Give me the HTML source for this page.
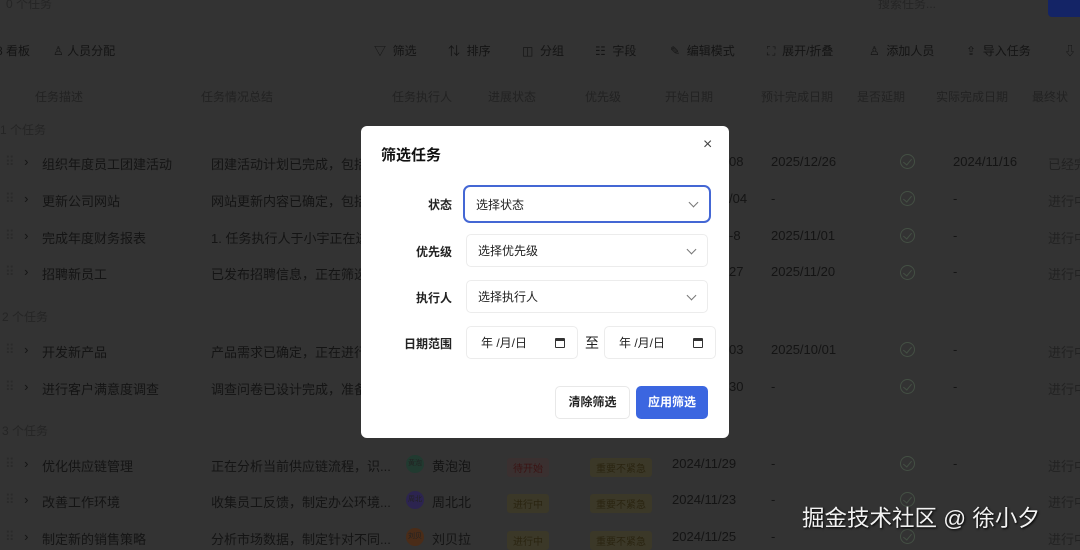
<!DOCTYPE html>
<html><head><meta charset="utf-8"><style>
*{box-sizing:border-box;margin:0;padding:0}
body{width:1080px;height:548px;overflow:hidden;background:#333333;font-family:"Liberation Sans","Noto Sans CJK SC",sans-serif;color:#141414;font-size:13px;position:relative}
.a{position:absolute;white-space:nowrap}
.h{color:#222;font-size:12px}
.g{color:#252525;font-size:12px}
.tb{color:#141414;font-size:12px}
.chk{position:absolute;width:15px;height:15px;border:1.5px solid #445044;border-radius:50%}
.chk:after{content:"";position:absolute;left:4px;top:2px;width:4px;height:7px;border-right:1.5px solid #445044;border-bottom:1.5px solid #445044;transform:rotate(40deg)}
.tag{position:absolute;font-size:10px;padding:2px 6px;border-radius:3px}
.av{position:absolute;width:18px;height:18px;border-radius:50%;font-size:7px;color:#222;text-align:center;line-height:18px}
.modal{position:absolute;left:361px;top:126px;width:368px;height:312px;background:#fff;border-radius:6px}
.lab{position:absolute;right:277px;font-size:12px;font-weight:bold;color:#222}
.sel{position:absolute;border:1px solid #ececec;border-radius:5px;font-size:12px;color:#222;padding-left:11px;display:flex;align-items:center}
.sel .cv{position:absolute;right:12px;top:50%;margin-top:-5px;width:7px;height:7px;border-right:1.2px solid #777;border-bottom:1.2px solid #777;transform:rotate(45deg)}
.cal{position:absolute;right:12px;top:11px;width:10px;height:10px;border:1.5px solid #333;border-top-width:3px;border-radius:1px}
</style></head><body>
<div class="a g" style="left:6px;top:-5px">0 个任务</div>
<div class="a g" style="left:878px;top:-5px">搜索任务...</div>
<div class="a" style="left:1048px;top:-10px;width:40px;height:27px;background:#142466;border-radius:4px"></div>

<div class="a tb" style="left:-4px;top:42px">8 看板</div>
<div class="a tb" style="left:53px;top:42px">♙ 人员分配</div>
<div class="a tb" style="left:374px;top:42px">▽&nbsp; 筛选</div>
<div class="a tb" style="left:448px;top:42px">⇅&nbsp; 排序</div>
<div class="a tb" style="left:522px;top:42px">◫&nbsp; 分组</div>
<div class="a tb" style="left:595px;top:42px">☷&nbsp; 字段</div>
<div class="a tb" style="left:670px;top:42px">✎&nbsp; 编辑模式</div>
<div class="a tb" style="left:767px;top:42px">⛶&nbsp; 展开/折叠</div>
<div class="a tb" style="left:869px;top:42px">♙&nbsp; 添加人员</div>
<div class="a tb" style="left:966px;top:42px">⇪&nbsp; 导入任务</div>
<div class="a tb" style="left:1064px;top:42px">⇩</div>

<div class="a h" style="left:35px;top:88px">任务描述</div>
<div class="a h" style="left:201px;top:88px">任务情况总结</div>
<div class="a h" style="left:392px;top:88px">任务执行人</div>
<div class="a h" style="left:488px;top:88px">进展状态</div>
<div class="a h" style="left:585px;top:88px">优先级</div>
<div class="a h" style="left:665px;top:88px">开始日期</div>
<div class="a h" style="left:761px;top:88px">预计完成日期</div>
<div class="a h" style="left:857px;top:88px">是否延期</div>
<div class="a h" style="left:936px;top:88px">实际完成日期</div>
<div class="a h" style="left:1032px;top:88px">最终状</div>

<div class="a g" style="left:0px;top:121px">1 个任务</div>
<div class="a g" style="left:2px;top:308px">2 个任务</div>
<div class="a g" style="left:2px;top:422px">3 个任务</div>

<div class="a" style="left:5px;top:154px;color:#2a2a2a">⠿ <span style="margin-left:6px;color:#141414">›</span></div>
<div class="a" style="left:42px;top:154px">组织年度员工团建活动</div>
<div class="a" style="left:211px;top:154px">团建活动计划已完成，包括</div>
<div class="a" style="left:729px;top:154px">08</div>
<div class="a" style="left:771px;top:154px">2025/12/26</div>
<div class="a" style="left:953px;top:154px">2024/11/16</div>
<div class="a" style="left:1048px;top:154px;color:#222">已经完</div>

<div class="a" style="left:5px;top:191px;color:#2a2a2a">⠿ <span style="margin-left:6px;color:#141414">›</span></div>
<div class="a" style="left:42px;top:191px">更新公司网站</div>
<div class="a" style="left:211px;top:191px">网站更新内容已确定，包括</div>
<div class="a" style="left:729px;top:191px">/04</div>
<div class="a" style="left:771px;top:191px">-</div>
<div class="a" style="left:953px;top:191px">-</div>
<div class="a" style="left:1048px;top:191px;color:#222">进行中</div>

<div class="a" style="left:5px;top:228px;color:#2a2a2a">⠿ <span style="margin-left:6px;color:#141414">›</span></div>
<div class="a" style="left:42px;top:228px">完成年度财务报表</div>
<div class="a" style="left:211px;top:228px">1. 任务执行人于小宇正在进</div>
<div class="a" style="left:729px;top:228px">-8</div>
<div class="a" style="left:771px;top:228px">2025/11/01</div>
<div class="a" style="left:953px;top:228px">-</div>
<div class="a" style="left:1048px;top:228px;color:#222">进行中</div>

<div class="a" style="left:5px;top:264px;color:#2a2a2a">⠿ <span style="margin-left:6px;color:#141414">›</span></div>
<div class="a" style="left:42px;top:264px">招聘新员工</div>
<div class="a" style="left:211px;top:264px">已发布招聘信息，正在筛选</div>
<div class="a" style="left:729px;top:264px">27</div>
<div class="a" style="left:771px;top:264px">2025/11/20</div>
<div class="a" style="left:953px;top:264px">-</div>
<div class="a" style="left:1048px;top:264px;color:#222">进行中</div>

<div class="a" style="left:5px;top:342px;color:#2a2a2a">⠿ <span style="margin-left:6px;color:#141414">›</span></div>
<div class="a" style="left:42px;top:342px">开发新产品</div>
<div class="a" style="left:211px;top:342px">产品需求已确定，正在进行</div>
<div class="a" style="left:729px;top:342px">03</div>
<div class="a" style="left:771px;top:342px">2025/10/01</div>
<div class="a" style="left:953px;top:342px">-</div>
<div class="a" style="left:1048px;top:342px;color:#222">进行中</div>

<div class="a" style="left:5px;top:379px;color:#2a2a2a">⠿ <span style="margin-left:6px;color:#141414">›</span></div>
<div class="a" style="left:42px;top:379px">进行客户满意度调查</div>
<div class="a" style="left:211px;top:379px">调查问卷已设计完成，准备</div>
<div class="a" style="left:729px;top:379px">30</div>
<div class="a" style="left:771px;top:379px">-</div>
<div class="a" style="left:953px;top:379px">-</div>
<div class="a" style="left:1048px;top:379px;color:#222">进行中</div>

<div class="a" style="left:5px;top:456px;color:#2a2a2a">⠿ <span style="margin-left:6px;color:#141414">›</span></div>
<div class="a" style="left:42px;top:456px">优化供应链管理</div>
<div class="a" style="left:211px;top:456px">正在分析当前供应链流程，识...</div>
<div class="av" style="left:406px;top:455px;background:#213a30">黄泡</div>
<div class="a" style="left:432px;top:456px">黄泡泡</div>
<div class="tag" style="left:507px;top:458px;background:#3a3030;color:#3a1414">待开始</div>
<div class="tag" style="left:590px;top:458px;background:#3b3828;color:#2a2410">重要不紧急</div>
<div class="a" style="left:672px;top:456px">2024/11/29</div>
<div class="a" style="left:771px;top:456px">-</div>
<div class="a" style="left:953px;top:456px">-</div>
<div class="a" style="left:1048px;top:456px;color:#222">进行中</div>

<div class="a" style="left:5px;top:492px;color:#2a2a2a">⠿ <span style="margin-left:6px;color:#141414">›</span></div>
<div class="a" style="left:42px;top:492px">改善工作环境</div>
<div class="a" style="left:211px;top:492px">收集员工反馈，制定办公环境...</div>
<div class="av" style="left:406px;top:491px;background:#2c2450">周北</div>
<div class="a" style="left:432px;top:492px">周北北</div>
<div class="tag" style="left:507px;top:494px;background:#3b3828;color:#2a2410">进行中</div>
<div class="tag" style="left:590px;top:494px;background:#3b3828;color:#2a2410">重要不紧急</div>
<div class="a" style="left:672px;top:492px">2024/11/23</div>
<div class="a" style="left:771px;top:492px">-</div>
<div class="a" style="left:1048px;top:492px;color:#222">进行中</div>

<div class="a" style="left:5px;top:529px;color:#2a2a2a">⠿ <span style="margin-left:6px;color:#141414">›</span></div>
<div class="a" style="left:42px;top:529px">制定新的销售策略</div>
<div class="a" style="left:211px;top:529px">分析市场数据，制定针对不同...</div>
<div class="av" style="left:406px;top:528px;background:#4a2c18">刘贝</div>
<div class="a" style="left:432px;top:529px">刘贝拉</div>
<div class="tag" style="left:507px;top:531px;background:#3b3828;color:#2a2410">进行中</div>
<div class="tag" style="left:590px;top:531px;background:#3b3828;color:#2a2410">重要不紧急</div>
<div class="a" style="left:672px;top:529px">2024/11/25</div>
<div class="a" style="left:771px;top:529px">-</div>
<div class="a" style="left:1048px;top:529px;color:#222">进行中</div>

<div class="chk" style="left:900px;top:154px"></div>
<div class="chk" style="left:900px;top:191px"></div>
<div class="chk" style="left:900px;top:228px"></div>
<div class="chk" style="left:900px;top:265px"></div>
<div class="chk" style="left:900px;top:342px"></div>
<div class="chk" style="left:900px;top:379px"></div>
<div class="chk" style="left:900px;top:456px"></div>
<div class="chk" style="left:900px;top:492px"></div>
<div class="chk" style="left:900px;top:529px"></div>

<div class="a" style="left:802px;top:501px;font-size:22.5px;color:#f2f2f2;text-shadow:1px 1px 2px #000">掘金技术社区 @ 徐小夕</div>

<div class="modal">
 <div class="a" style="left:20px;top:18px;font-size:15px;font-weight:bold;color:#111">筛选任务</div>
 <div class="a" style="left:342px;top:10px;font-size:16px;color:#444">×</div>
 <div class="lab" style="top:70px">状态</div>
 <div class="sel" style="left:102px;top:59px;width:248px;height:38px;border:2px solid #4467d4;border-radius:7px">选择状态<span class="cv"></span></div>
 <div class="lab" style="top:117px">优先级</div>
 <div class="sel" style="left:105px;top:108px;width:242px;height:33px">选择优先级<span class="cv"></span></div>
 <div class="lab" style="top:163px">执行人</div>
 <div class="sel" style="left:105px;top:154px;width:242px;height:33px">选择执行人<span class="cv"></span></div>
 <div class="lab" style="top:209px">日期范围</div>
 <div class="sel" style="left:105px;top:200px;width:112px;height:33px;padding-left:14px">年 /月/日<span class="cal"></span></div>
 <div class="a" style="left:224px;top:207px;font-size:14px;color:#222">至</div>
 <div class="sel" style="left:243px;top:200px;width:112px;height:33px;padding-left:14px">年 /月/日<span class="cal"></span></div>
 <div class="a" style="left:194px;top:260px;width:75px;height:33px;border:1px solid #e8e8e8;border-radius:5px;font-size:12px;font-weight:bold;text-align:center;line-height:31px;color:#222">清除筛选</div>
 <div class="a" style="left:275px;top:260px;width:72px;height:33px;background:#3b66e0;border-radius:5px;font-size:12px;font-weight:bold;text-align:center;line-height:33px;color:#fff">应用筛选</div>
</div>
</body></html>
